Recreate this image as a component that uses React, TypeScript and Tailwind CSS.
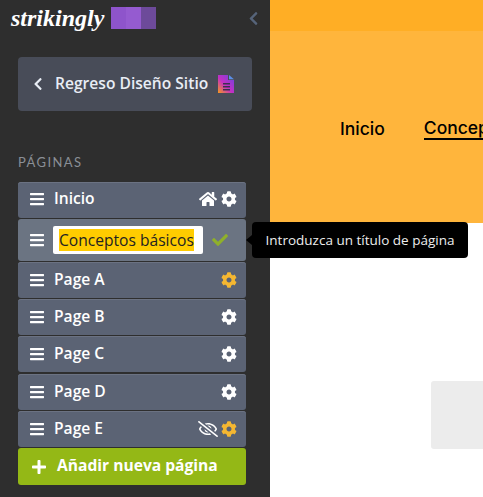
import React from 'react';
import { FaBars, FaCheck, FaChevronLeft, FaCog, FaHome, FaPlus, FaRegEyeSlash } from 'react-icons/fa';

const pages = [
  { name: 'Inicio', home: true },
  { name: 'Conceptos básicos', editing: true },
  { name: 'Page A', warn: true },
  { name: 'Page B' },
  { name: 'Page C' },
  { name: 'Page D', nudge: true },
  { name: 'Page E', hidden: true, warn: true },
];

const DocIcon = () => (
  <svg width="16" height="18" viewBox="0 0 16 18">
    <defs>
      <linearGradient id="doc" x1="0" y1="1" x2="1" y2="0">
        <stop offset="0" stopColor="#f59a1c" />
        <stop offset="0.45" stopColor="#c42fc4" />
        <stop offset="1" stopColor="#6a45e0" />
      </linearGradient>
    </defs>
    <path d="M0 0h10v5h6v13H0z" fill="url(#doc)" />
    <path d="M11 0l5 4.2h-5z" fill="#5b8ee8" />
    <path d="M5 8h7v1.5H5zM5 11h7v1.5H5zM5 14h7v1.5H5z" fill="#3a3050" />
  </svg>
);

const PageRow = ({ page }: { page: (typeof pages)[number] }) => {
  if (page.editing) {
    return (
      <div className="flex h-[42px] items-center rounded-[3px] bg-[#6b7482] pl-[11px]">
        <FaBars className="h-[16px] w-[16px] text-white" />
        <div className="ml-[8px] flex h-[28px] w-[150px] items-center rounded-[2px] bg-white pl-[6px]">
          <span className="bg-[#ffcc00] text-[15.6px] leading-[22px] whitespace-nowrap text-[#222]">{page.name}</span>
        </div>
        <FaCheck className="ml-[9px] h-[16px] w-[16px] text-[#8fb02a]" />
      </div>
    );
  }
  return (
    <div className={`flex h-[36px] items-center rounded-[3px] bg-[#5b6374] pr-[9px] pl-[11px] shadow-[inset_0_1px_0_#6b7282] ${page.home ? 'pb-[2px]' : ''} ${page.nudge ? 'mt-[1px]' : ''}`}>
      <FaBars className="h-[16px] w-[16px] text-white" />
      <span className="ml-[9px] flex-1 text-[15.6px] font-semibold text-white">{page.name}</span>
      {page.home && <FaHome className="mr-[4px] h-[18px] w-[18px] text-white" />}
      {page.hidden && <FaRegEyeSlash className="mr-[3px] h-[18px] w-[20px] text-white" />}
      <FaCog className={`h-[16px] w-[16px] ${page.warn ? 'text-[#f5b731]' : 'text-white'}`} />
    </div>
  );
};

export default function App() {
  return (
    <div className="flex h-[497px] w-[483px] overflow-hidden bg-white font-['Open_Sans',sans-serif]">
      <aside className="relative z-10 flex w-[270px] shrink-0 flex-col bg-[#2e2e2e] px-[18px]">
        <div className="-mx-[7px] mt-[7px] flex h-[22px] items-center">
          <span className="font-['Liberation_Serif',serif] text-[24px] leading-none font-bold italic text-white">strikingly</span>
          <div className="ml-[7px] flex h-[22px]">
            <div className="w-[15px] bg-[#8e54cb]" />
            <div className="w-[15px] bg-[#955bd0]" />
            <div className="w-[15px] bg-[#6d4a9a]" />
          </div>
          <FaChevronLeft className="ml-auto mr-[-2px] h-[15px] w-[15px] text-[#56647a]" />
        </div>

        <button className="mt-[28px] flex h-[54px] w-[234px] items-center rounded-[4px] bg-[#484c58] pl-[13px] text-[#e8edf5]">
          <FaChevronLeft className="h-[14px] w-[14px]" />
          <span className="ml-[10px] -mt-[1px] text-[15.6px] font-semibold whitespace-nowrap">Regreso Diseño Sitio</span>
          <span className="ml-[10px] flex"><DocIcon /></span>
        </button>

        <div className="mt-[43px] font-['Lato',sans-serif] text-[13px] leading-[16px] tracking-[1.4px] text-[#8a8f96]">PÁGINAS</div>

        <div className="mt-[12px] flex w-[228px] flex-col gap-[1px]">
          {pages.map(page => <PageRow key={page.name} page={page} />)}
          <button className="flex h-[37px] items-center rounded-[3px] bg-[#94b816] pl-[13px] text-white">
            <FaPlus className="h-[16px] w-[16px]" />
            <span className="ml-[10px] -mt-[1px] text-[15.6px] font-bold whitespace-nowrap">Añadir nueva página</span>
          </button>
        </div>

        {/* tooltip over the editing row */}
        <div className="absolute top-[222px] left-[252px] flex h-[36px] w-[216px] items-center justify-center rounded-[4px] bg-black text-[13.5px] whitespace-nowrap text-[#eeeeee]">
          <div className="absolute top-[13px] -left-[6px] h-0 w-0 border-y-[5px] border-r-[6px] border-y-transparent border-r-black" />
          Introduzca un título de página
        </div>
      </aside>

      <main className="flex min-w-0 flex-1 flex-col">
        <div className="h-[31px] bg-[#ffae25]" />
        <nav className="flex h-[192px] items-center gap-[39px] overflow-hidden bg-[#ffb53c] pt-[4px] pl-[70px] font-['Inter',sans-serif] text-[17.5px] font-medium whitespace-nowrap text-black">
          <span>Inicio</span>
          <span className="w-[59px] overflow-hidden border-b-2 border-black leading-[20px]">Conceptos</span>
        </nav>
        <div className="flex flex-1 justify-end pt-[158px]">
          <div className="h-[68px] w-[52px] rounded-tl-[3px] rounded-bl-[3px] bg-[#ececec]" />
        </div>
      </main>
    </div>
  );
}
